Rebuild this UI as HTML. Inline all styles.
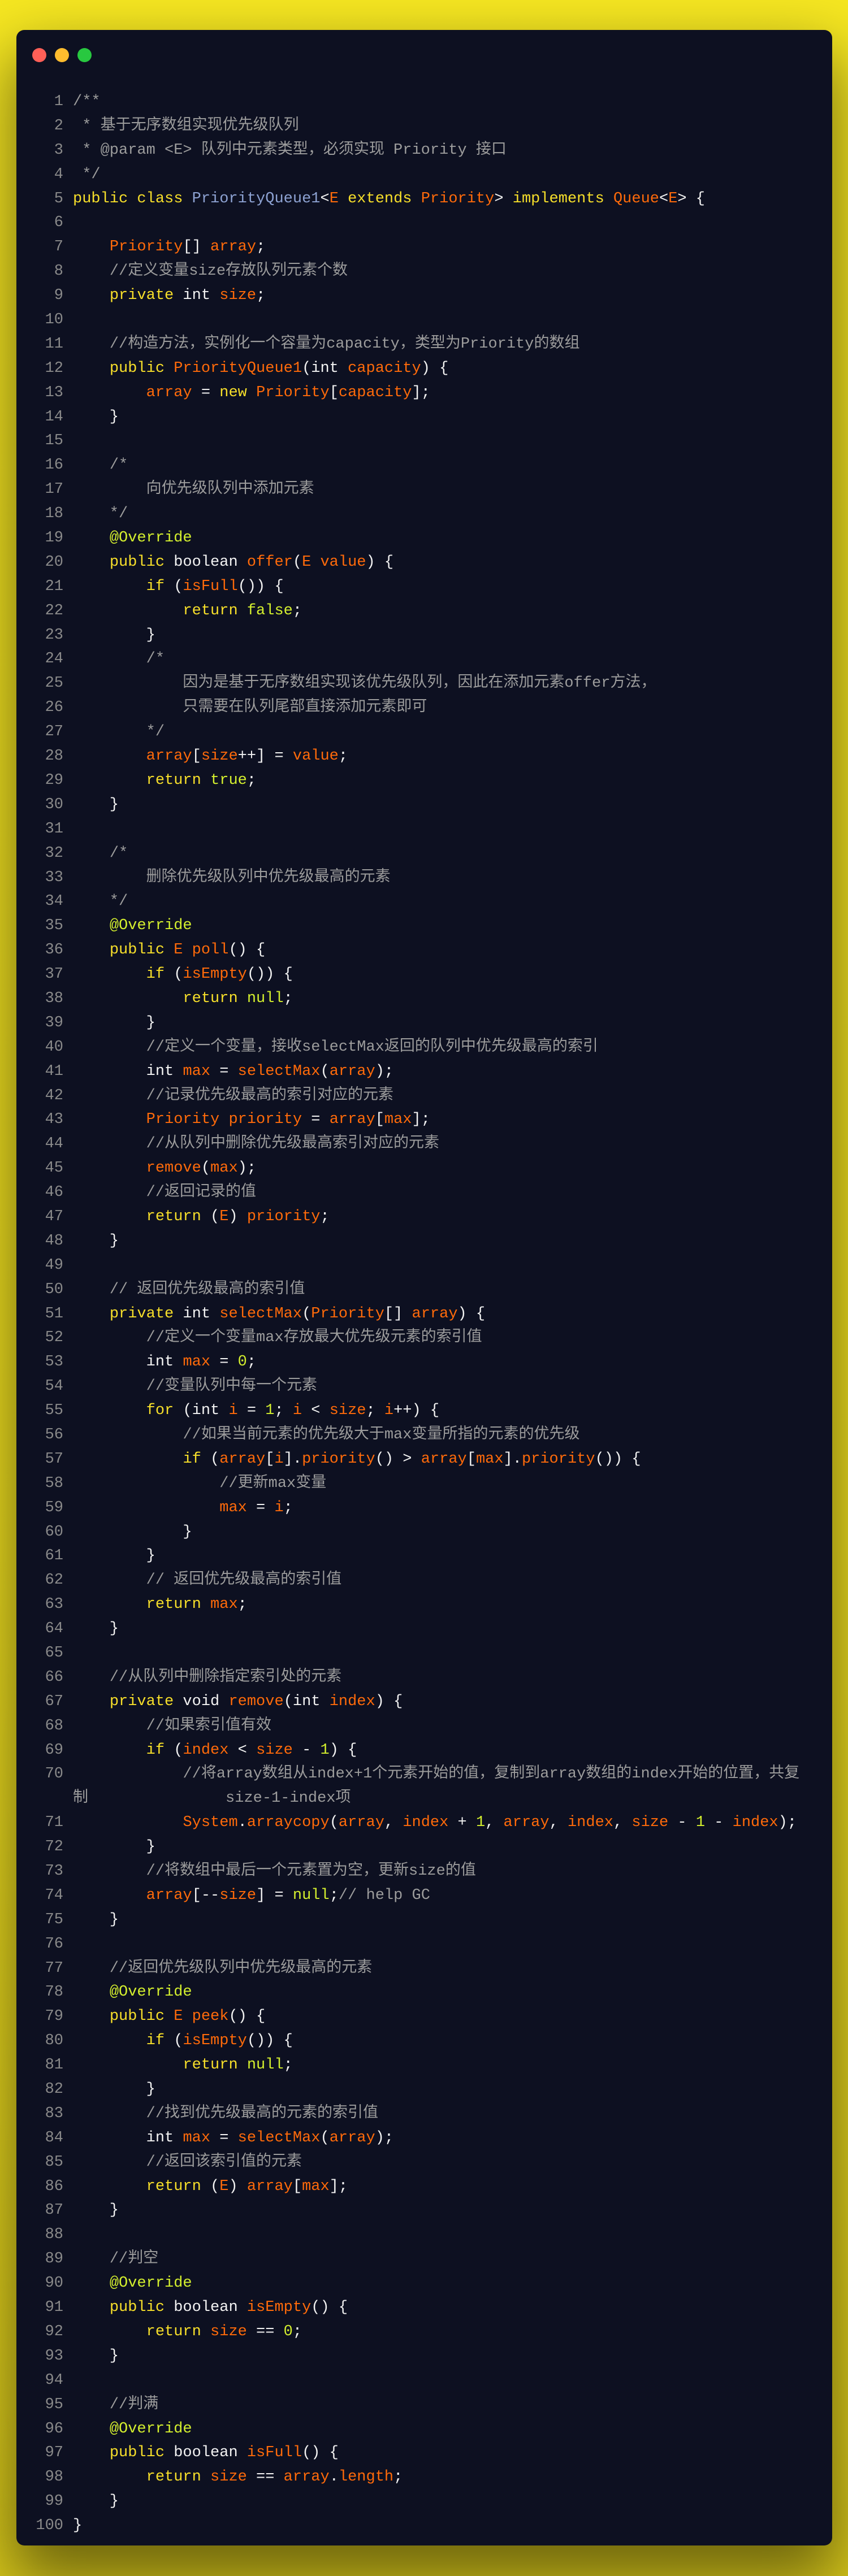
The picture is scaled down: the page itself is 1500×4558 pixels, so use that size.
<!DOCTYPE html>
<html><head><meta charset="utf-8">
<style>
html,body{margin:0;padding:0}
body{width:1500px;height:4558px;background:linear-gradient(180deg,#f6e721 0%,#efdf1f 60%,#d9c91b 100%);position:relative;overflow:hidden}
.win{position:absolute;left:29px;top:53px;width:1443px;height:4451px;background:#0d1021;border-radius:14px;box-shadow:0 50px 110px 10px rgba(0,0,0,0.5)}
.dot{position:absolute;top:32px;width:25px;height:25px;border-radius:50%}
.code{position:absolute;left:0;top:106px;font-family:"Liberation Mono","Noto Sans CJK SC",monospace;font-size:27px;line-height:42.9px;color:#f2f2f2}
.l{position:relative;height:42.9px;padding-left:100px;white-space:pre}
.l i{position:absolute;left:0;width:83px;text-align:right;font-style:normal;color:#8a8a8a}
.k{color:#f7df2a}.o{color:#ff6a0a}.c{color:#9c9c9c}.n{color:#d4ef2e}.b{color:#8da2d2}.w{color:#f2f2f2}
</style></head><body>
<div class="win">
<div class="dot" style="left:28px;background:#ff5f57"></div>
<div class="dot" style="left:68px;background:#febc2e"></div>
<div class="dot" style="left:108px;background:#28c840"></div>
<div class="code">
<div class="l"><i>1</i><span class="c">/**</span></div>
<div class="l"><i>2</i><span class="c"> * 基于无序数组实现优先级队列</span></div>
<div class="l"><i>3</i><span class="c"> * @param &lt;E&gt; 队列中元素类型，必须实现 Priority 接口</span></div>
<div class="l"><i>4</i><span class="c"> */</span></div>
<div class="l"><i>5</i><span class="k">public class</span> <span class="b">PriorityQueue1</span>&lt;<span class="o">E</span> <span class="k">extends</span> <span class="o">Priority</span>&gt; <span class="k">implements</span> <span class="o">Queue</span>&lt;<span class="o">E</span>&gt; {</div>
<div class="l"><i>6</i></div>
<div class="l"><i>7</i>    <span class="o">Priority</span>[] <span class="o">array</span>;</div>
<div class="l"><i>8</i>    <span class="c">//定义变量size存放队列元素个数</span></div>
<div class="l"><i>9</i>    <span class="k">private</span> int <span class="o">size</span>;</div>
<div class="l"><i>10</i></div>
<div class="l"><i>11</i>    <span class="c">//构造方法，实例化一个容量为capacity，类型为Priority的数组</span></div>
<div class="l"><i>12</i>    <span class="k">public</span> <span class="o">PriorityQueue1</span>(int <span class="o">capacity</span>) {</div>
<div class="l"><i>13</i>        <span class="o">array</span> = <span class="k">new</span> <span class="o">Priority</span>[<span class="o">capacity</span>];</div>
<div class="l"><i>14</i>    }</div>
<div class="l"><i>15</i></div>
<div class="l"><i>16</i>    <span class="c">/*</span></div>
<div class="l"><i>17</i><span class="c">        向优先级队列中添加元素</span></div>
<div class="l"><i>18</i><span class="c">    */</span></div>
<div class="l"><i>19</i>    <span class="n">@Override</span></div>
<div class="l"><i>20</i>    <span class="k">public</span> boolean <span class="o">offer</span>(<span class="o">E</span> <span class="o">value</span>) {</div>
<div class="l"><i>21</i>        <span class="k">if</span> (<span class="o">isFull</span>()) {</div>
<div class="l"><i>22</i>            <span class="k">return</span> <span class="n">false</span>;</div>
<div class="l"><i>23</i>        }</div>
<div class="l"><i>24</i>        <span class="c">/*</span></div>
<div class="l"><i>25</i><span class="c">            因为是基于无序数组实现该优先级队列，因此在添加元素offer方法，</span></div>
<div class="l"><i>26</i><span class="c">            只需要在队列尾部直接添加元素即可</span></div>
<div class="l"><i>27</i><span class="c">        */</span></div>
<div class="l"><i>28</i>        <span class="o">array</span>[<span class="o">size</span>++] = <span class="o">value</span>;</div>
<div class="l"><i>29</i>        <span class="k">return</span> <span class="n">true</span>;</div>
<div class="l"><i>30</i>    }</div>
<div class="l"><i>31</i></div>
<div class="l"><i>32</i>    <span class="c">/*</span></div>
<div class="l"><i>33</i><span class="c">        删除优先级队列中优先级最高的元素</span></div>
<div class="l"><i>34</i><span class="c">    */</span></div>
<div class="l"><i>35</i>    <span class="n">@Override</span></div>
<div class="l"><i>36</i>    <span class="k">public</span> <span class="o">E</span> <span class="o">poll</span>() {</div>
<div class="l"><i>37</i>        <span class="k">if</span> (<span class="o">isEmpty</span>()) {</div>
<div class="l"><i>38</i>            <span class="k">return</span> <span class="n">null</span>;</div>
<div class="l"><i>39</i>        }</div>
<div class="l"><i>40</i>        <span class="c">//定义一个变量，接收selectMax返回的队列中优先级最高的索引</span></div>
<div class="l"><i>41</i>        int <span class="o">max</span> = <span class="o">selectMax</span>(<span class="o">array</span>);</div>
<div class="l"><i>42</i>        <span class="c">//记录优先级最高的索引对应的元素</span></div>
<div class="l"><i>43</i>        <span class="o">Priority</span> <span class="o">priority</span> = <span class="o">array</span>[<span class="o">max</span>];</div>
<div class="l"><i>44</i>        <span class="c">//从队列中删除优先级最高索引对应的元素</span></div>
<div class="l"><i>45</i>        <span class="o">remove</span>(<span class="o">max</span>);</div>
<div class="l"><i>46</i>        <span class="c">//返回记录的值</span></div>
<div class="l"><i>47</i>        <span class="k">return</span> (<span class="o">E</span>) <span class="o">priority</span>;</div>
<div class="l"><i>48</i>    }</div>
<div class="l"><i>49</i></div>
<div class="l"><i>50</i>    <span class="c">// 返回优先级最高的索引值</span></div>
<div class="l"><i>51</i>    <span class="k">private</span> int <span class="o">selectMax</span>(<span class="o">Priority</span>[] <span class="o">array</span>) {</div>
<div class="l"><i>52</i>        <span class="c">//定义一个变量max存放最大优先级元素的索引值</span></div>
<div class="l"><i>53</i>        int <span class="o">max</span> = <span class="n">0</span>;</div>
<div class="l"><i>54</i>        <span class="c">//变量队列中每一个元素</span></div>
<div class="l"><i>55</i>        <span class="k">for</span> (int <span class="o">i</span> = <span class="n">1</span>; <span class="o">i</span> &lt; <span class="o">size</span>; <span class="o">i</span>++) {</div>
<div class="l"><i>56</i>            <span class="c">//如果当前元素的优先级大于max变量所指的元素的优先级</span></div>
<div class="l"><i>57</i>            <span class="k">if</span> (<span class="o">array</span>[<span class="o">i</span>].<span class="o">priority</span>() &gt; <span class="o">array</span>[<span class="o">max</span>].<span class="o">priority</span>()) {</div>
<div class="l"><i>58</i>                <span class="c">//更新max变量</span></div>
<div class="l"><i>59</i>                <span class="o">max</span> = <span class="o">i</span>;</div>
<div class="l"><i>60</i>            }</div>
<div class="l"><i>61</i>        }</div>
<div class="l"><i>62</i>        <span class="c">// 返回优先级最高的索引值</span></div>
<div class="l"><i>63</i>        <span class="k">return</span> <span class="o">max</span>;</div>
<div class="l"><i>64</i>    }</div>
<div class="l"><i>65</i></div>
<div class="l"><i>66</i>    <span class="c">//从队列中删除指定索引处的元素</span></div>
<div class="l"><i>67</i>    <span class="k">private</span> void <span class="o">remove</span>(int <span class="o">index</span>) {</div>
<div class="l"><i>68</i>        <span class="c">//如果索引值有效</span></div>
<div class="l"><i>69</i>        <span class="k">if</span> (<span class="o">index</span> &lt; <span class="o">size</span> - <span class="n">1</span>) {</div>
<div class="l"><i>70</i>            <span class="c">//将array数组从index+1个元素开始的值，复制到array数组的index开始的位置，共复</span></div>
<div class="l"><span class="c">制               size-1-index项</span></div>
<div class="l"><i>71</i>            <span class="o">System</span>.<span class="o">arraycopy</span>(<span class="o">array</span>, <span class="o">index</span> + <span class="n">1</span>, <span class="o">array</span>, <span class="o">index</span>, <span class="o">size</span> - <span class="n">1</span> - <span class="o">index</span>);</div>
<div class="l"><i>72</i>        }</div>
<div class="l"><i>73</i>        <span class="c">//将数组中最后一个元素置为空，更新size的值</span></div>
<div class="l"><i>74</i>        <span class="o">array</span>[--<span class="o">size</span>] = <span class="n">null</span>;<span class="c">// help GC</span></div>
<div class="l"><i>75</i>    }</div>
<div class="l"><i>76</i></div>
<div class="l"><i>77</i>    <span class="c">//返回优先级队列中优先级最高的元素</span></div>
<div class="l"><i>78</i>    <span class="n">@Override</span></div>
<div class="l"><i>79</i>    <span class="k">public</span> <span class="o">E</span> <span class="o">peek</span>() {</div>
<div class="l"><i>80</i>        <span class="k">if</span> (<span class="o">isEmpty</span>()) {</div>
<div class="l"><i>81</i>            <span class="k">return</span> <span class="n">null</span>;</div>
<div class="l"><i>82</i>        }</div>
<div class="l"><i>83</i>        <span class="c">//找到优先级最高的元素的索引值</span></div>
<div class="l"><i>84</i>        int <span class="o">max</span> = <span class="o">selectMax</span>(<span class="o">array</span>);</div>
<div class="l"><i>85</i>        <span class="c">//返回该索引值的元素</span></div>
<div class="l"><i>86</i>        <span class="k">return</span> (<span class="o">E</span>) <span class="o">array</span>[<span class="o">max</span>];</div>
<div class="l"><i>87</i>    }</div>
<div class="l"><i>88</i></div>
<div class="l"><i>89</i>    <span class="c">//判空</span></div>
<div class="l"><i>90</i>    <span class="n">@Override</span></div>
<div class="l"><i>91</i>    <span class="k">public</span> boolean <span class="o">isEmpty</span>() {</div>
<div class="l"><i>92</i>        <span class="k">return</span> <span class="o">size</span> == <span class="n">0</span>;</div>
<div class="l"><i>93</i>    }</div>
<div class="l"><i>94</i></div>
<div class="l"><i>95</i>    <span class="c">//判满</span></div>
<div class="l"><i>96</i>    <span class="n">@Override</span></div>
<div class="l"><i>97</i>    <span class="k">public</span> boolean <span class="o">isFull</span>() {</div>
<div class="l"><i>98</i>        <span class="k">return</span> <span class="o">size</span> == <span class="o">array</span>.<span class="o">length</span>;</div>
<div class="l"><i>99</i>    }</div>
<div class="l"><i>100</i>}</div>
</div>
</div>
</body></html>
